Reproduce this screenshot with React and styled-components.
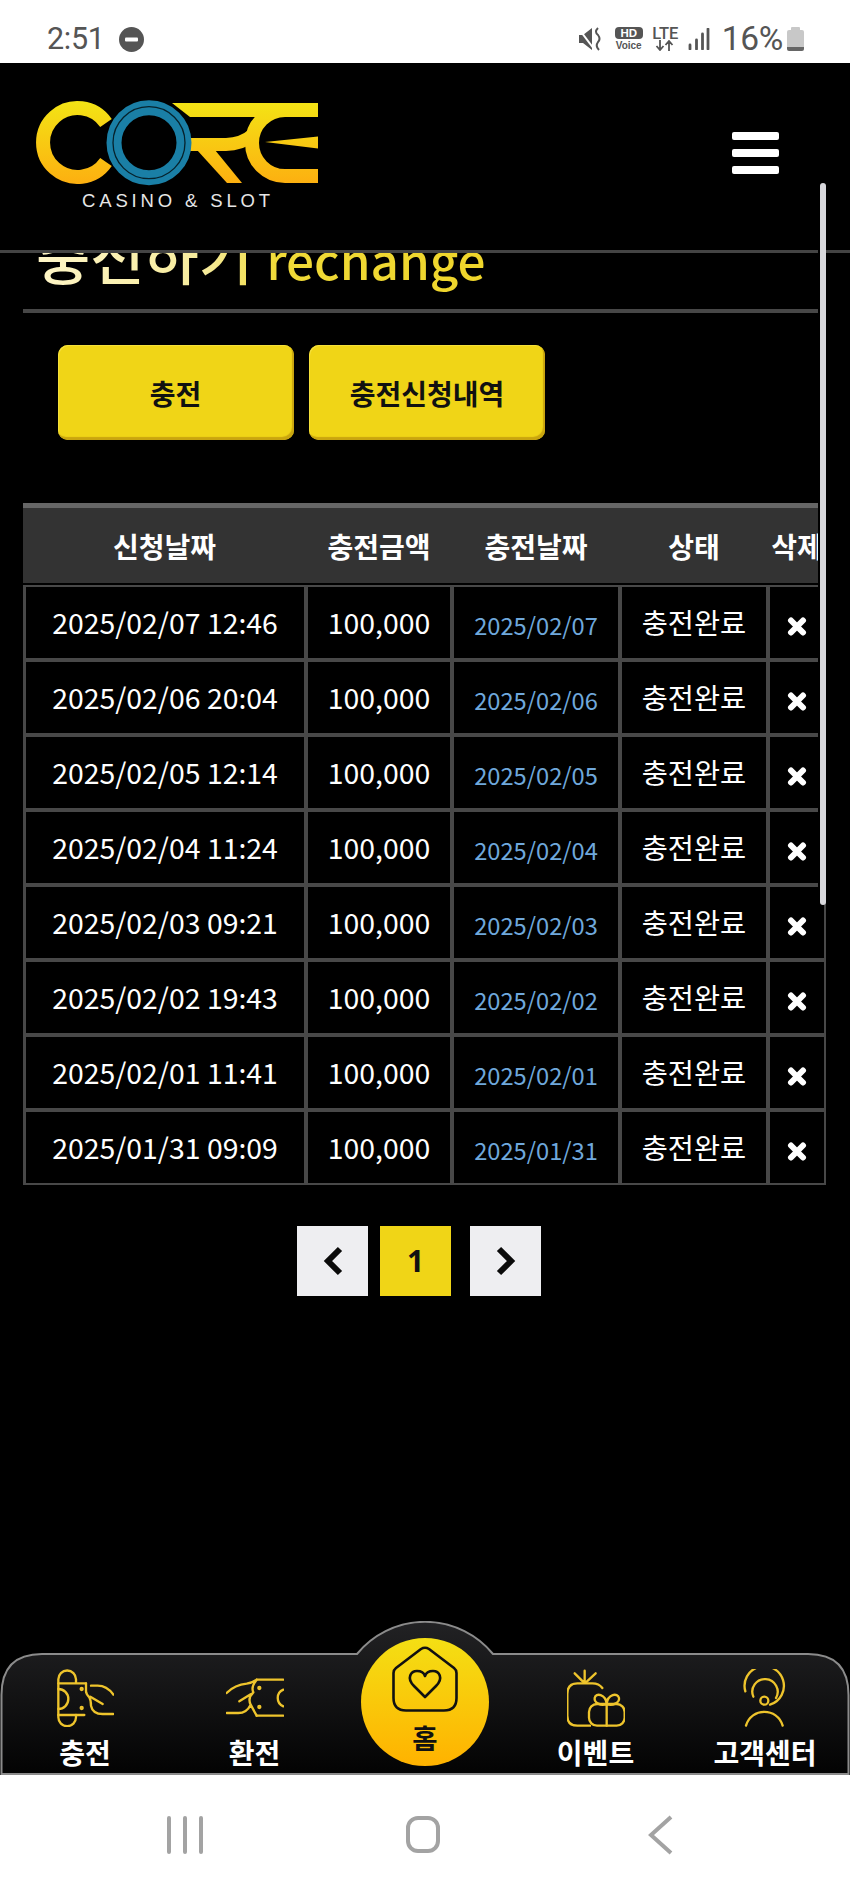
import React from 'react';
import styled, { createGlobalStyle } from 'styled-components';

const KR = `"Noto Sans CJK KR", "Noto Sans", sans-serif`;

const Global = createGlobalStyle`
  html, body { margin: 0; padding: 0; background: #000; }
  * { box-sizing: border-box; }
`;

const Page = styled.div`
  width: 850px; height: 1889px; display: flex; flex-direction: column; overflow: hidden;
  font-family: ${KR}; background: #000;
`;

/* status bar */
const StatusBar = styled.div`
  height: 63px; flex: none; background: #fff; display: flex; align-items: center;
  justify-content: space-between; padding: 15px 46px 0 47px; color: #555;
`;
const StatusLeft = styled.div`display: flex; align-items: center; gap: 14px;`;
const Clock = styled.span`font: 400 30.5px/1 Roboto, sans-serif; letter-spacing: -0.3px;`;
const StatusRight = styled.div`display: flex; align-items: center;`;
const HdBlock = styled.div`display: flex; flex-direction: column; align-items: center; margin-left: 12px; width: 28px;`;
const HdBadge = styled.span`
  width: 28px; height: 12px; border-radius: 4px; background: #555; color: #fff;
  font: 700 11.5px/12px "Liberation Sans", sans-serif; text-align: center;
`;
const HdVoice = styled.span`font: 700 10px/11px "Liberation Sans", sans-serif; margin-top: 1px; color: #555;`;
const LteBlock = styled.div`display: flex; flex-direction: column; align-items: center; margin-left: 9px; width: 27px;`;
const LteText = styled.span`font: 500 16.5px/13px "Roboto", sans-serif; letter-spacing: -0.2px;`;
const Percent = styled.span`font: 400 33.5px/1 Roboto, sans-serif; margin-left: 12px; letter-spacing: -0.3px;`;
const Battery = styled.div`
  width: 17px; height: 21px; margin-left: 4px; margin-top: 3px; background: linear-gradient(#c8c8c8 0 82%, #666 82%);
  border-radius: 2px; position: relative;
  &::before { content: ''; position: absolute; left: 4px; right: 4px; top: -3px; height: 3px; background: #c8c8c8; border-radius: 1px 1px 0 0; }
`;

/* main */
const Main = styled.div`flex: 1; min-height: 0; position: relative; background: #000; overflow: hidden;`;
const Header = styled.header`
  height: 190px; border-bottom: 3px solid #444; display: flex; justify-content: space-between;
  padding: 35px 71px 0 30px;
`;
const LogoBlock = styled.div`display: flex; flex-direction: column;`;
const LogoMark = styled.svg`display: block; width: 300px; height: 88px;`;
const Tagline = styled.div`
  font: 400 18.5px/20px "Liberation Sans", sans-serif; letter-spacing: 3.85px; color: #e6e6e6;
  padding-left: 52px; margin-top: 5px; white-space: nowrap;
`;
const Burger = styled.button`
  all: unset; width: 47px; margin-top: 34px; display: flex; flex-direction: column; gap: 9px;
`;
const BurgerBar = styled.span`height: 8px; border-radius: 2px; background: #fff;`;

const Content = styled.div`margin-left: 23px; width: 803px;`;
const TitleClip = styled.div`height: 56px; overflow: hidden; display: flex; align-items: flex-end; padding: 0 0 12px 13px;`;
const Title = styled.h1`
  margin: 0; font: 500 59px/76px ${KR}; white-space: nowrap; flex: none;
  background: linear-gradient(90deg, #fff6c8 0, #f6eb9a 170px, #f0da38 240px, #efd52a 100%);
  -webkit-background-clip: text; background-clip: text; color: transparent;
`;
const TitleLatin = styled.span`font-size: 49.5px;`;
const TitleRule = styled.div`height: 4px; background: #474747;`;

const Tabs = styled.div`display: flex; gap: 15.5px; padding: 32px 0 0 34.5px;`;
const TabButton = styled.button`
  all: unset; width: 236px; height: 95px; border-radius: 10px; display: flex; align-items: center; justify-content: center;
  background: #f0d517; box-shadow: inset -2px -3px 1px #c9a50f, inset 1px 1px 0 #f5e03a;
  font: 700 28px/1 ${KR}; color: #111;
`;

const Table = styled.table`
  width: 803px; margin-top: 63px; border-collapse: separate; border-spacing: 0; table-layout: fixed;
`;
const Th = styled.th`
  height: 82px; padding: 0 0 2px; background: linear-gradient(#333 0 97%, #000 97%); border-top: 5px solid #666;
  color: #fff; font: 700 28px/1 ${KR}; text-align: center; white-space: nowrap; overflow: hidden;
`;
const Td = styled.td`
  height: 75px; padding: 0 0 1px; text-align: center; color: #fff; white-space: nowrap;
  font: 400 28.4px/1 ${KR}; border: 2px solid #484848;
  &:first-child { border-left-width: 3px; }
`;
const Blue = styled.span`color: #6fa8dc; font-size: 23.7px; position: relative; top: 1px;`;
const DeleteMark = styled.svg`display: inline-block; width: 20px; height: 21px; vertical-align: middle; position: relative; top: 1px;`;

const Pager = styled.div`display: flex; gap: 12px; padding: 41px 0 0 274px;`;
const PageBtn = styled.button`
  all: unset; width: 71px; height: 70px; display: flex; align-items: center; justify-content: center;
  background: ${p => (p.$active ? '#f0d517' : '#eeeef1')}; color: #111;
  font: 700 30px/1 "Noto Sans", sans-serif; margin-left: ${p => p.$shift || 0}px;
`;

const Thumb = styled.div`
  position: absolute; left: 820px; top: 120px; width: 6px; height: 722px; border-radius: 3px;
  background: #d8d8dc; box-shadow: -2px 0 0 #000;
`;

/* bottom nav */
const Nav = styled.nav`
  position: absolute; left: 0; right: 0; bottom: 0; height: 154px; display: grid;
  grid-template-columns: 170px 169px 172px 169px 170px;
`;
const NavShape = styled.svg`position: absolute; inset: 0; width: 850px; height: 154px;`;
const NavItem = styled.a`
  position: relative; display: flex; flex-direction: column; align-items: center; padding-top: 48px;
  color: #fff; font: 700 28px/30px ${KR}; white-space: nowrap;
`;
const NavIcon = styled.svg`
  width: 58px; height: 58px; margin-bottom: 10px; fill: none; stroke: #eec42c; stroke-width: 7;
  stroke-linecap: round; stroke-linejoin: round;
`;
const HomeItem = styled.a`
  position: relative; display: flex; justify-content: center; padding-top: 17px;
`;
const HomeDisc = styled.div`
  width: 128px; height: 128px; border-radius: 50%; display: flex; flex-direction: column; align-items: center;
  background: linear-gradient(#f4df14, #ffb200); padding-top: 8px; color: #111; font: 700 27.5px/30px ${KR};
`;
const HomeIcon = styled.svg`width: 66px; height: 66px; margin-bottom: 10px; fill: none; stroke: #111; stroke-width: 2.6; stroke-linejoin: round; flex: none;`;

/* android bar */
const AndroidBar = styled.div`
  height: 114px; flex: none; background: #fff; display: grid; grid-template-columns: repeat(3, 238px);
  padding: 6px 0 0 66px; align-items: center; justify-items: center;
`;
const SysIcon = styled.svg`display: block; width: 44px; height: 40px; fill: none; stroke: #a3a3a3; stroke-width: 4; stroke-linecap: round; stroke-linejoin: round;`;

const rows = [
  ['2025/02/07 12:46', '2025/02/07'],
  ['2025/02/06 20:04', '2025/02/06'],
  ['2025/02/05 12:14', '2025/02/05'],
  ['2025/02/04 11:24', '2025/02/04'],
  ['2025/02/03 09:21', '2025/02/03'],
  ['2025/02/02 19:43', '2025/02/02'],
  ['2025/02/01 11:41', '2025/02/01'],
  ['2025/01/31 09:09', '2025/01/31'],
];

function Logo() {
  return (
    <LogoMark viewBox="30 98 300 88">
      <defs>
        <linearGradient id="lg" gradientUnits="userSpaceOnUse" x1="0" y1="100" x2="0" y2="186">
          <stop offset="0" stopColor="#f3e515" />
          <stop offset="1" stopColor="#fdae10" />
        </linearGradient>
      </defs>
      <path d="M106 123 A34.5 34.5 0 1 0 106 162" fill="none" stroke="url(#lg)" strokeWidth="14" />
      <path d="M172 103 H285 V117 H190 Z" fill="url(#lg)" />
      <path d="M186 144.500 H226 Q242 144.500 254 134" fill="none" stroke="url(#lg)" strokeWidth="13" />
      <path d="M197 150 H215 L242 183 H227 Z" fill="url(#lg)" />
      <path d="M318 110 H285 A33 33 0 0 0 285 176 H318" fill="none" stroke="url(#lg)" strokeWidth="14" />
      <path d="M265 142 L318 136.500 V148.500 Z" fill="url(#lg)" />
      <circle cx="149" cy="142.7" r="35" fill="#000" stroke="#1a7fa6" strokeWidth="15" />
      <circle cx="149" cy="142.7" r="36" fill="none" stroke="#06222c" strokeWidth="1.3" />
    </LogoMark>
  );
}

const Chevron = ({ d }) => (
  <svg width="24" height="30" viewBox="0 0 24 30"><path d={d} fill="none" stroke="#0a0a0a" strokeWidth="6" strokeLinejoin="miter" /></svg>
);

export default function App() {
  return (
    <Page>
      <Global />
      <StatusBar>
        <StatusLeft>
          <Clock>2:51</Clock>
          <svg width="25" height="25" viewBox="0 0 25 25"><circle cx="12.5" cy="12.5" r="12.500" fill="#555" /><rect x="6" y="10.500" width="13" height="4" rx="1" fill="#fff" /></svg>
        </StatusLeft>
        <StatusRight>
          <svg width="24" height="24" viewBox="0 0 24 24">
            <path d="M0 8 L4 8 L13 1 V23 L4 16 H0 Z" fill="#555" />
            <path d="M0 2 L15 22" stroke="#fff" strokeWidth="2" />
            <path d="M19 1 Q15 5 19 8 Q22 12 19 15 Q16 19 20 23" fill="none" stroke="#555" strokeWidth="2" />
          </svg>
          <HdBlock><HdBadge>HD</HdBadge><HdVoice>Voice</HdVoice></HdBlock>
          <LteBlock>
            <LteText>LTE</LteText>
            <svg width="20" height="11" viewBox="0 0 20 11"><path d="M5 0 V10 M1.500 6 L5 10 L8.500 6 M14 11 V1 M10.500 5 L14 1 L17.500 5" fill="none" stroke="#555" strokeWidth="1.800" /></svg>
          </LteBlock>
          <svg width="22" height="22" viewBox="0 0 22 22" style={{ marginLeft: 9 }}>
            <path d="M2 17 V21 M8.500 12 V21 M14.500 6 V21 M20 1 V21" stroke="#555" strokeWidth="2.800" strokeLinecap="round" />
          </svg>
          <Percent>16%</Percent>
          <Battery />
        </StatusRight>
      </StatusBar>

      <Main>
        <Header>
          <LogoBlock>
            <Logo />
            <Tagline>CASINO &amp; SLOT</Tagline>
          </LogoBlock>
          <Burger aria-label="menu"><BurgerBar /><BurgerBar /><BurgerBar /></Burger>
        </Header>
        <Content>
          <TitleClip><Title>충전하기 <TitleLatin>rechange</TitleLatin></Title></TitleClip>
          <TitleRule />
          <Tabs>
            <TabButton>충전</TabButton>
            <TabButton>충전신청내역</TabButton>
          </Tabs>
          <Table>
            <colgroup>
              <col style={{ width: 283 }} /><col style={{ width: 146 }} /><col style={{ width: 168 }} /><col style={{ width: 148 }} /><col style={{ width: 58 }} />
            </colgroup>
            <thead>
              <tr><Th>신청날짜</Th><Th>충전금액</Th><Th>충전날짜</Th><Th>상태</Th><Th>삭제</Th></tr>
            </thead>
            <tbody>
              {rows.map(([a, b]) => (
                <tr key={a}>
                  <Td>{a}</Td>
                  <Td>100,000</Td>
                  <Td><Blue>{b}</Blue></Td>
                  <Td>충전완료</Td>
                  <Td>
                    <DeleteMark viewBox="0 0 20 21"><path d="M4 4.500 L16 16.500 M16 4.500 L4 16.500" stroke="#fff" strokeWidth="6" strokeLinecap="round" /></DeleteMark>
                  </Td>
                </tr>
              ))}
            </tbody>
          </Table>
          <Pager>
            <PageBtn aria-label="previous"><Chevron d="M19 3 L7 15 L19 27" /></PageBtn>
            <PageBtn $active>1</PageBtn>
            <PageBtn aria-label="next" $shift={7}><Chevron d="M5 3 L17 15 L5 27" /></PageBtn>
          </Pager>
        </Content>
        <Thumb />
        <Nav>
          <NavShape viewBox="0 0 850 154">
            <defs>
              <linearGradient id="nb" x1="0" y1="0" x2="0" y2="1">
                <stop offset="0" stopColor="#222224" />
                <stop offset="1" stopColor="#030303" />
              </linearGradient>
            </defs>
            <path d="M1.500 153 V74 Q1.500 33 42 33 H357 A88 88 0 0 1 493 33 H808 Q848.500 33 848.500 74 V153 Z" fill="url(#nb)" stroke="#8b8b8b" strokeWidth="2" />
          </NavShape>
          <NavItem>
            <NavIcon viewBox="45 25 174 174">
              <path d="M52 170 V56 A26 26 0 0 1 105 56 V66 M52 170 A26 26 0 0 0 105 170 V163" />
              <path d="M52 68 H135 M52 163 H130 M52 85 A30 30 0 0 1 52 145" />
              <path d="M135 68 V92 Q135 100 145 110 Q150 118 150 135 Q155 160 185 160 H217" />
              <path d="M150 75 H170 Q198 75 217 102 M148 108 L185 130" />
              <circle cx="122" cy="85" r="3" /><circle cx="122" cy="142" r="3" />
            </NavIcon>
            충전
          </NavItem>
          <NavItem>
            <NavIcon viewBox="558 28 174 174">
              <path d="M650 60 H730 M650 168 H730 M730 90 A27 27 0 0 0 730 140" />
              <path d="M560 100 Q585 75 620 72 Q635 70 650 60 M560 160 H595 Q620 160 632 135 Q640 150 650 168 M632 135 Q622 115 640 98 M640 98 Q632 82 650 60 M598 125 L632 104" />
              <circle cx="658" cy="85" r="3" /><circle cx="658" cy="142" r="3" />
            </NavIcon>
            환전
          </NavItem>
          <HomeItem>
            <HomeDisc>
              <HomeIcon viewBox="0 0 66 66">
                <path d="M1.500 27 Q1.500 24 4 22 L29 3 Q33 .5 37 3 L62 22 Q64.500 24 64.500 27 V52 Q64.500 64.500 52 64.500 H14 Q1.500 64.500 1.500 52 Z" />
                <path d="M33 51 L22 40 C14 32 19 25 25 25 C29 25 32 27 33 30 C34 27 37 25 41 25 C47 25 52 32 44 40 Z" />
              </HomeIcon>
              홈
            </HomeDisc>
          </HomeItem>
          <NavItem>
            <NavIcon viewBox="49 25 174 174">
              <path d="M155 82 Q145 68 125 68 H80 Q50 68 50 100 V165 Q50 195 80 195 H118" />
              <path d="M72 38 L100 66 M102 30 V66 M135 38 L105 66" />
              <rect x="115" y="130" width="107" height="65" rx="24" />
              <path d="M168 130 V195 M168 130 C150 138 130 125 132 112 C135 95 165 100 168 130 C171 100 201 95 205 112 C207 125 186 138 168 130" />
            </NavIcon>
            이벤트
          </NavItem>
          <NavItem>
            <NavIcon viewBox="560 25 174 174">
              <path d="M588 92 A59 59 0 1 1 662 132 M612 108 A38 38 0 1 1 680 112" />
              <circle cx="645" cy="120" r="12" />
              <path d="M590 195 C605 140 685 140 700 195" />
            </NavIcon>
            고객센터
          </NavItem>
        </Nav>
      </Main>

      <AndroidBar>
        <SysIcon viewBox="0 0 44 40"><path d="M6 3 V37 M22 3 V37 M38 3 V37" /></SysIcon>
        <SysIcon viewBox="0 0 44 40"><rect x="7" y="3" width="30" height="33" rx="10" /></SysIcon>
        <SysIcon viewBox="0 0 44 40"><path d="M32 2 L12 20 L32 38" strokeLinecap="butt" strokeLinejoin="miter" /></SysIcon>
      </AndroidBar>
    </Page>
  );
}
